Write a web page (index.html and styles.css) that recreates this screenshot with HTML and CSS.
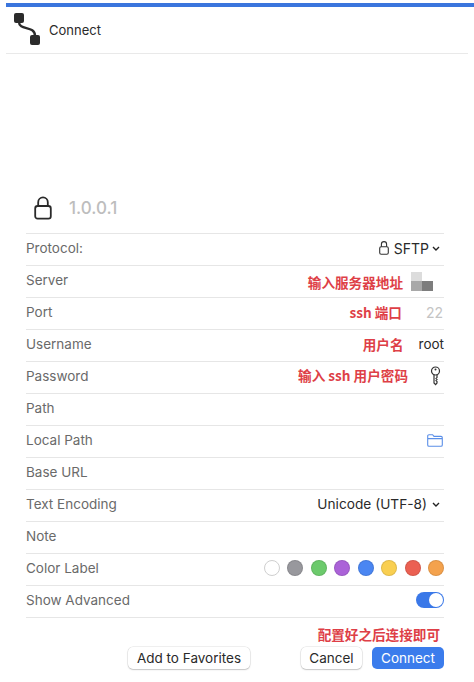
FILE: index.html
```html
<!DOCTYPE html>
<html lang="en">
<head>
<meta charset="utf-8">
<title>Connect</title>
<link rel="stylesheet" href="styles.css">
</head>
<body>
<div class="progress"></div>
<header class="header">
  <svg class="logo" width="30" height="36" viewBox="0 0 30 36"><rect x="1" y="1" width="10" height="10" rx="2" fill="#2b2b2b"/><rect x="17" y="23" width="10" height="10" rx="2" fill="#2b2b2b"/><path d="M6 10 C6 19 22 13 22 24" fill="none" stroke="#2b2b2b" stroke-width="2.4"/></svg>
  <span class="title">Connect</span>
</header>
<main class="form">
  <div class="hero">
    <svg width="18" height="24" viewBox="0 0 18 24"><rect x="1.2" y="10" width="15.6" height="12.6" rx="2.4" fill="none" stroke="#2a2a2a" stroke-width="1.8"/><path d="M4.2 10V6.2a4.8 4.8 0 0 1 9.6 0V10" fill="none" stroke="#2a2a2a" stroke-width="1.8"/></svg>
    <span class="host">1.0.0.1</span>
  </div>
  <div class="row"><span class="label">Protocol:</span>
    <span class="value proto"><svg width="10" height="14" viewBox="0 0 10 14"><rect x=".7" y="5.7" width="8.6" height="7.6" rx="1.5" fill="none" stroke="#333" stroke-width="1.1"/><path d="M2.4 5.7V3.2a2.6 2.6 0 0 1 5.2 0v2.5" fill="none" stroke="#333" stroke-width="1.1"/></svg>SFTP<svg class="chev" width="8" height="5" viewBox="0 0 8 5"><path d="M1 1l3 3 3-3" fill="none" stroke="#222" stroke-width="1.4"/></svg></span></div>
  <div class="row"><span class="label">Server</span>
    <span class="note server-note">输入服务器地址</span>
    <span class="mosaic"><i class="m1"></i><i class="m0"></i><i class="m2"></i><i class="m3"></i></span></div>
  <div class="row"><span class="label">Port</span>
    <span class="note port-note">ssh 端口</span><span class="port">22</span></div>
  <div class="row"><span class="label">Username</span>
    <span class="note user-note">用户名</span><span class="value">root</span></div>
  <div class="row"><span class="label">Password</span>
    <span class="note pass-note">输入 ssh 用户密码</span>
    <svg class="key" width="11" height="20" viewBox="0 0 11 20"><circle cx="5.5" cy="5" r="4" fill="none" stroke="#333" stroke-width="1.2"/><circle cx="5.5" cy="3.4" r="1" fill="#333"/><path d="M4 8.6V17l1.6 1.6L7 17v-1.4l-1-1 1-1-1-1 1-1V8.6" fill="none" stroke="#333" stroke-width="1.2"/></svg></div>
  <div class="row"><span class="label">Path</span></div>
  <div class="row"><span class="label">Local Path</span>
    <svg class="folder" width="16" height="13" viewBox="0 0 16 13"><path d="M.7 3V2a1.3 1.3 0 0 1 1.3-1.3h3.6L7 2.4h7a1.3 1.3 0 0 1 1.3 1.3V11a1.3 1.3 0 0 1-1.3 1.3H2A1.3 1.3 0 0 1 .7 11V3zm0 1.6h14.6" fill="none" stroke="#5b8fe8" stroke-width="1.1"/></svg></div>
  <div class="row"><span class="label">Base URL</span></div>
  <div class="row"><span class="label">Text Encoding</span>
    <span class="value enc">Unicode (UTF-8)<svg class="chev" width="8" height="5" viewBox="0 0 8 5"><path d="M1 1l3 3 3-3" fill="none" stroke="#222" stroke-width="1.4"/></svg></span></div>
  <div class="row"><span class="label">Note</span></div>
  <div class="row"><span class="label">Color Label</span>
    <span class="swatches">
      <i class="dot none"></i><i class="dot gray"></i><i class="dot green"></i><i class="dot purple"></i><i class="dot blue"></i><i class="dot yellow"></i><i class="dot red"></i><i class="dot orange"></i>
    </span></div>
  <div class="row"><span class="label">Show Advanced</span><span class="toggle"><i class="knob"></i></span></div>
  <div class="rule"></div>
  <p class="hint">配置好之后连接即可</p>
  <div class="actions">
    <button class="btn fav">Add to Favorites</button>
    <button class="btn cancel">Cancel</button>
    <button class="btn primary">Connect</button>
  </div>
</main>
</body>
</html>
```
FILE: styles.css
```css
html, body { margin: 0; padding: 0; background: #fff; }
body {
  width: 474px; height: 682px; overflow: hidden;
  font-family: "Inter", "Liberation Sans", "Noto Sans CJK SC", sans-serif;
  color: #222;
}
.progress { height: 4px; margin: 3px 0 0 6px; background: #3a75dd; }
.header {
  height: 47px; margin-left: 6px; margin-right: 6px;
  display: flex; align-items: center; gap: 5px;
  padding-left: 7px; box-sizing: border-box;
  border-bottom: 1px solid #e9e9e9;
}
.logo { margin-top: -1px; }
.title { font-size: 13px; color: #2a2a2a; margin-left: 1px; }
.form { margin: 0 30px 0 26px; }
.hero {
  height: 46px; margin-top: 133px; padding: 0 0 4px 8px; box-sizing: border-box;
  display: flex; align-items: center; gap: 17px;
}
.host { font-size: 17px; font-weight: 500; color: #bdbdbd; }
.row {
  height: 32px; box-sizing: border-box; padding-bottom: 3px;
  border-top: 1px solid #e6e6e6;
  display: flex; align-items: center; justify-content: flex-end;
  font-size: 13.5px; position: relative;
}
.label { margin-right: auto; color: #6a6a6a; }
.value { color: #2a2a2a; }
.proto { display: flex; align-items: center; gap: 5px; margin-right: 4px; font-size: 14px; }
.proto .chev { margin-left: -2px; }
.enc { display: flex; align-items: center; gap: 5px; margin-right: 4px; font-size: 13.7px; }
.note { color: #de3f47; font-size: 13.6px; font-weight: 700; font-family: "Noto Sans CJK SC", sans-serif; line-height: 18px; }
.server-note { margin-right: 8px; margin-top: 3px; }
.port-note { margin-right: 24px; margin-top: 0; }
.user-note { margin-right: 15px; margin-top: 0; }
.pass-note { margin-right: 22px; margin-top: -2px; }
.mosaic { display: grid; grid-template-columns: 11px 11px; grid-template-rows: 9px 10px; margin-right: 11px; margin-top: 3px; }
.mosaic i { display: block; }
.m1 { background: #dcdcdc; }
.m0 { background: #fff; }
.m2 { background: #a8a8a8; }
.m3 { background: #7d7d7d; }
.port { color: #c4c4c4; font-size: 14px; margin-right: 1px; }
.key { margin-right: 3px; }
.folder { margin-right: 1px; }
.swatches { display: flex; gap: 7.5px; margin-right: 0; }
.dot { display: block; width: 16px; height: 16px; border-radius: 50%; box-sizing: border-box; border: 1px solid rgba(0,0,0,.1); }
.none { background: #fff; border-color: #cfcfcf; }
.gray { background: #98989d; }
.green { background: #6cca6c; }
.purple { background: #ab62d8; }
.blue { background: #4a86f2; }
.yellow { background: #f9cf51; }
.red { background: #eb6052; }
.orange { background: #f4a24d; }
.toggle { width: 28px; height: 16px; border-radius: 8px; background: #3a78e8; display: flex; justify-content: flex-end; align-items: center; padding-right: 1px; box-sizing: border-box; }
.knob { display: block; width: 14px; height: 14px; border-radius: 50%; background: #fff; }
.rule { border-top: 1px solid #e6e6e6; }
.hint { margin: 6px 0 0; text-align: right; color: #de3f47; font-size: 13.6px; font-weight: 700; line-height: 20px; font-family: "Noto Sans CJK SC", sans-serif; padding-right: 4px; }
.actions { display: flex; align-items: center; margin-top: 3px; padding-left: 102px; }
.btn {
  height: 22px; padding: 0; border: 0; border-radius: 5px;
  font: 13.5px "Inter", "Liberation Sans", sans-serif; color: #2a2a2a; background: #fff;
  box-shadow: 0 0 0 .5px rgba(0,0,0,.12), 0 1px 1.5px rgba(0,0,0,.18);
}
.fav { width: 122px; margin-right: auto; }
.cancel { width: 61px; margin-right: 10px; }
.primary { width: 72px; background: #3b7cec; color: #fff; box-shadow: none; }
```
